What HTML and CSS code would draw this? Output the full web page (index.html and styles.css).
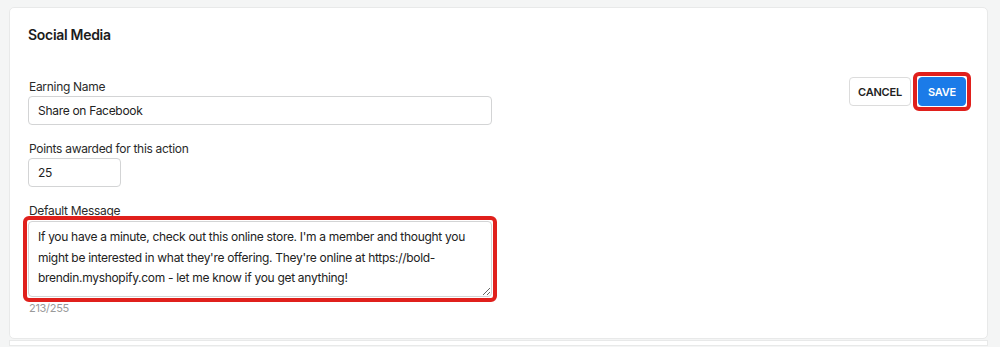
FILE: index.html
```html
<!DOCTYPE html>
<html lang="en">
<head>
  <meta charset="UTF-8">
  <meta name="viewport" content="width=device-width, initial-scale=1.0">
  <title>Social Media</title>
  <link rel="stylesheet" href="styles.css">
</head>
<body>
  <div class="card">
    <h2 class="card-title">Social Media</h2>
    <div class="form-row">
      <div class="fields">
        <label class="field-label" for="earning-name">Earning Name</label>
        <input class="text-input wide" id="earning-name" type="text" value="Share on Facebook">

        <label class="field-label" for="points">Points awarded for this action</label>
        <input class="text-input short" id="points" type="text" value="25">

        <label class="field-label" for="message">Default Message</label>
        <div class="highlight">
          <textarea class="text-input message" id="message">If you have a minute, check out this online store. I'm a member and thought you might be interested in what they're offering. They're online at https://bold-brendin.myshopify.com - let me know if you get anything!</textarea>
        </div>
        <div class="counter">213/255</div>
      </div>
      <div class="actions">
        <button class="btn btn-cancel">CANCEL</button>
        <div class="highlight">
          <button class="btn btn-save">SAVE</button>
        </div>
      </div>
    </div>
  </div>
  <div class="card next"></div>
</body>
</html>
```

FILE: styles.css
```css
html {
  height: 347px;
  overflow: hidden;
}
body {
  margin: 0;
  padding: 7px 12px 0 9px;
  background-color: #f4f5f5;
  font-family: Inter, "Liberation Sans", sans-serif;
  font-size: 12px;
  letter-spacing: -0.3px;
  color: #222;
}
.card {
  background-color: white;
  border: 1px solid #e8e9e9;
  border-radius: 5px;
  padding: 17px 21px 0 18px;
  height: 313px;
}
.card.next {
  margin-top: 1px;
  height: 4px;
  padding: 0;
  border-radius: 0;
}
.card-title {
  margin: 0;
  font-size: 14px;
  font-weight: 600;
  line-height: 20px;
  color: #1c1c1c;
}
.form-row {
  display: flex;
  justify-content: space-between;
  align-items: flex-start;
  margin-top: 32px;
}
.fields {
  display: flex;
  flex-direction: column;
  align-items: flex-start;
  width: 464px;
  padding-top: 2px;
}
.field-label {
  display: block;
  line-height: 16px;
  margin: 0 0 1px 1px;
  color: #2a2a2a;
}
.text-input {
  box-sizing: border-box;
  height: 29px;
  padding: 0 9px;
  border: 1px solid #d3d4d5;
  border-radius: 4px;
  font-family: inherit;
  font-size: 12px;
  letter-spacing: -0.3px;
  color: #222;
  margin-bottom: 16px;
}
.wide {
  width: 464px;
}
.short {
  width: 93px;
}
.highlight {
  outline: 4px solid #e0201c;
  outline-offset: 1px;
  border-radius: 1px;
}
.fields .highlight {
  margin-top: 1px;
}
.message {
  display: block;
  width: 464px;
  height: 76px;
  padding: 5px 9px;
  line-height: 20.5px;
  margin: 0;
  resize: vertical;
}
.counter {
  margin: 4px 0 0 1px;
  font-size: 11px;
  color: #9a9a9a;
}
.actions {
  display: flex;
  gap: 7px;
}
.btn {
  height: 29px;
  border-radius: 4px;
  font-family: inherit;
  font-size: 11px;
  font-weight: 600;
  letter-spacing: -0.2px;
  cursor: pointer;
  display: block;
}
.btn-cancel {
  width: 62px;
  background-color: white;
  border: 1px solid #dcdcdc;
  color: #222;
}
.btn-save {
  width: 48px;
  background-color: #1b7be8;
  border: 1px solid #1b7be8;
  color: white;
}
```
